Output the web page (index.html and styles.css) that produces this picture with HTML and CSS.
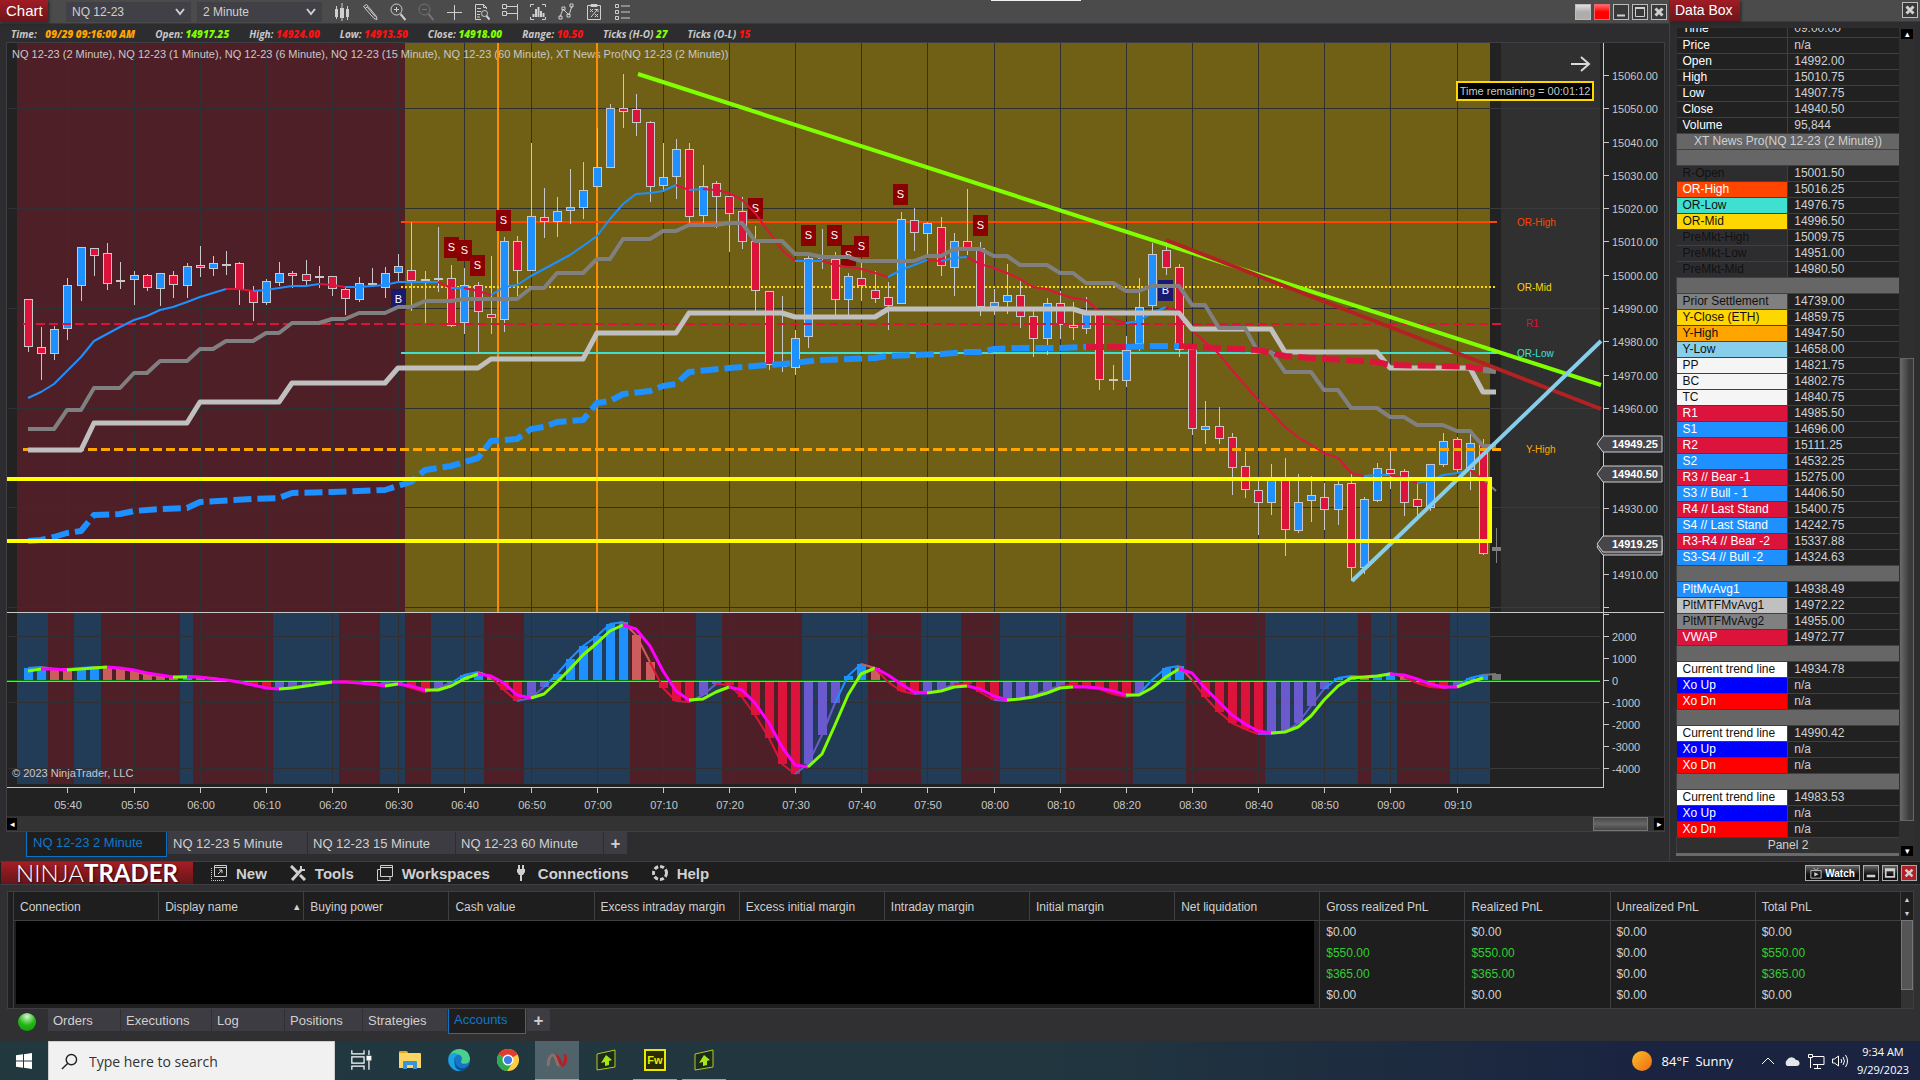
FILE: index.html
```html
<!DOCTYPE html>
<html lang="en">
<head>
<meta charset="utf-8">
<title>NinjaTrader - NQ 12-23</title>
<link rel="stylesheet" href="styles.css">
</head>
<body>
<div class="desktop">
  <div class="upper">
    <section class="chart-window">
      <header class="toolbar">
        <h1 class="red-title">Chart</h1>
        <select class="picker" aria-label="Instrument"><option>NQ 12-23</option></select>
        <select class="picker" aria-label="Interval"><option>2 Minute</option></select>
        <div class="tools">
          <button aria-label="Chart style"><svg viewBox="0 0 16 18"><path d="M2.500 3v13M8 0v18M13.500 3v14" class="s1"/><path d="M1 6h3v8H1zM6 5h4v10H6zM12 6h3v8h-3z" class="f"/></svg></button>
          <button aria-label="Draw"><svg viewBox="0 0 16 18"><path d="M1.500 3.500l3-2 10 12 .5 3-3-1zM3 5.500l3-2M5.500 4.500l8 9.500" class="s1"/></svg></button>
          <button aria-label="Zoom in"><svg viewBox="0 0 16 18"><circle cx="6.500" cy="6.500" r="5.500" class="s1"/><path d="M4 6.500h5M6.500 4v5" class="s1"/><path d="M10.500 11l5 6" class="s2"/></svg></button>
          <button aria-label="Zoom out" class="dim"><svg viewBox="0 0 16 18"><circle cx="6.500" cy="6.500" r="5.500" class="s1"/><path d="M4 6.500h5" class="s1"/><path d="M10.500 11l5 6" class="s2"/></svg></button>
          <button aria-label="Crosshair"><svg viewBox="0 0 16 18"><path d="M1 9.500h15M8.500 2v15" class="s1"/></svg></button>
          <button aria-label="Data box"><svg viewBox="0 0 16 18"><path d="M7 16.500H1.500v-15h8l3 3V6M9.500 1.500v3h3M3 5.500h4M3 8.500h4M3 11.500h3M3 14h3" class="s1"/><circle cx="10.500" cy="10.500" r="3" class="s1"/><path d="M12.500 13l3 3.500" class="s2"/></svg></button>
          <button aria-label="Chart trader"><svg viewBox="0 0 16 18"><path d="M.5 1.500h4v4h-4zM.5 8.500h4v4h-4zM4.500 3.500h11M4.500 10.500h11M15.500 1v16" class="s1"/></svg></button>
          <button aria-label="Data series"><svg viewBox="0 0 16 18"><path d="M.5 4V1.500H4M12 1.500h3.500V4M.5 14v2.500H4M12 16.500h3.500V14" class="s1"/><path d="M3.500 14v-3M6 14V6M8.500 14V4M11 14V8M13.500 14v-4" class="s2"/></svg></button>
          <button aria-label="Indicators"><svg viewBox="0 0 16 18"><path d="M2 14l3-8 6 6 3-9" class="s1"/><path d="M1 13h3v3H1zM4 4h3v3H4zM9 11h3v3H9zM12 1h3v3h-3z" class="s1"/></svg></button>
          <button aria-label="Strategies"><svg viewBox="0 0 16 18"><path d="M1.500 2.500h13v14h-13zM5 1.500h6v2H5zM4 6l3 3M7 6L4 9M9 11l3 3M12 11l-3 3M5 14l6-7M8.500 6.500H12V9" class="s1"/></svg></button>
          <button aria-label="Properties"><svg viewBox="0 0 16 18"><path d="M1.500 1.500h3v3h-3zM1.500 7.500h3v3h-3zM1.500 13.500h3v3h-3zM7 3h9M7 9h9M7 15h9" class="s1"/></svg></button>
        </div>
        <div class="win-buttons">
          <button class="link-grey" aria-label="Instrument link"></button>
          <button class="link-red" aria-label="Interval link"></button>
          <button aria-label="Minimize"><svg viewBox="0 0 14 14"><path d="M3 10.500h8" class="s2"/></svg></button>
          <button aria-label="Maximize"><svg viewBox="0 0 14 14"><path d="M2.500 3.500h9v8h-9z" class="s1"/><path d="M2 3h10" class="s2"/></svg></button>
          <button aria-label="Close"><svg viewBox="0 0 14 14"><path d="M3.500 3.500l7 7M10.500 3.500l-7 7" class="s3"/></svg></button>
        </div>
      </header>
      <div class="readout">
        <span class="r-time">Time: <b class="orange">09/29 09:16:00 AM</b></span>
        <span>Open: <b class="lime">14917.25</b></span>
        <span>High: <b class="red">14924.00</b></span>
        <span>Low: <b class="red">14913.50</b></span>
        <span>Close: <b class="lime">14918.00</b></span>
        <span>Range: <b class="red">10.50</b></span>
        <span>Ticks (H-O) <b class="lime">27</b></span>
        <span>Ticks (O-L) <b class="red">15</b></span>
      </div>
      <div class="chart-frame">
        <svg id="chart" class="chart" viewBox="7 43 1657 773" role="img" aria-label="NQ 12-23 price chart"></svg>
        <div class="hscroll"><button aria-label="Scroll left">◂</button><span class="hthumb"></span><button aria-label="Scroll right">▸</button></div>
      </div>
      <nav class="tabs chart-tabs">
        <button class="active t2">NQ 12-23 2 Minute</button><button class="t5">NQ 12-23 5 Minute</button><button class="t15">NQ 12-23 15 Minute</button><button class="t15">NQ 12-23 60 Minute</button><button class="plus" aria-label="Add tab">+</button>
      </nav>
    </section>

    <aside class="data-window">
      <header class="data-head"><h2 class="red-title">Data Box</h2><button class="close" aria-label="Close"><svg viewBox="0 0 14 14"><path d="M3.500 3.500l7 7M10.500 3.500l-7 7" class="s3"/></svg></button></header>
      <div class="data-body">
        <div class="data-clip"><table class="data"><tbody id="data-rows"></tbody></table></div>
        <div class="vscroll"><button aria-label="Scroll up">▴</button><span class="vthumb"></span><button aria-label="Scroll down">▾</button></div>
      </div>
    </aside>
  </div>

  <section class="control">
    <header class="control-head">
      <div class="logo">NINJA<b>TRADER</b></div>
      <nav class="menu">
        <a href="#new"><svg viewBox="0 0 16 16"><path d="M3.500.5h12v11h-12zM3 2.500h12M7 9l4-4M8 5h3v3" class="s1"/><path d="M.5 3v12.500H13" class="s1 dots"/></svg>New</a>
        <a href="#tools"><svg viewBox="0 0 16 16"><path d="M1 1l7 7M10 10l5 5M2 15L12 4" class="s3"/><path d="M11 1v4h4" class="s2"/></svg>Tools</a>
        <a href="#workspaces"><svg viewBox="0 0 16 16"><path d="M3.500.5h12v11h-12zM3 2.500h12M3 4.500H.5v11H13V12" class="s1"/></svg>Workspaces</a>
        <a href="#connections"><svg viewBox="0 0 16 16"><path d="M6 0v5M10 0v5M8 9v7" class="s2"/><path d="M4 4h8v3l-2 3H6L4 7z" class="f"/></svg>Connections</a>
        <a href="#help"><svg viewBox="0 0 16 16"><circle cx="8" cy="8" r="6.500" class="s3 ring"/></svg>Help</a>
      </nav>
      <div class="control-buttons">
        <button class="watch"><svg viewBox="0 0 14 14"><path d="M1 4h12v9H1zM4 1l3 3 3-3" class="s1"/><path d="M5 6l5 2.500L5 11z" class="f"/></svg>Watch</button>
        <button aria-label="Minimize"><svg viewBox="0 0 14 14"><path d="M2 10.500h10" class="s3"/></svg></button>
        <button aria-label="Maximize"><svg viewBox="0 0 14 14"><path d="M2 2.500h10v9H2zM2 4h10" class="s2"/></svg></button>
        <button class="x" aria-label="Close"><svg viewBox="0 0 14 14"><path d="M3 3l8 8M11 3l-8 8" class="s3"/></svg></button>
      </div>
    </header>
    <div class="accounts">
      <table>
        <thead><tr><th>Connection</th><th class="sorted">Display name</th><th>Buying power</th><th>Cash value</th><th>Excess intraday margin</th><th>Excess initial margin</th><th>Intraday margin</th><th>Initial margin</th><th>Net liquidation</th><th>Gross realized PnL</th><th>Realized PnL</th><th>Unrealized PnL</th><th>Total PnL</th></tr></thead>
        <tbody>
          <tr><td colspan="9" rowspan="4" class="hidden-cells"><div></div></td><td>$0.00</td><td>$0.00</td><td>$0.00</td><td>$0.00</td></tr>
          <tr><td class="up">$550.00</td><td class="up">$550.00</td><td>$0.00</td><td class="up">$550.00</td></tr>
          <tr><td class="up">$365.00</td><td class="up">$365.00</td><td>$0.00</td><td class="up">$365.00</td></tr>
          <tr><td>$0.00</td><td>$0.00</td><td>$0.00</td><td>$0.00</td></tr>
        </tbody>
      </table>
      <div class="acc-scroll"><button aria-label="Scroll up">▲</button><button aria-label="Scroll down">▼</button><span></span></div>
    </div>
    <nav class="tabs bottom-tabs"><i class="orb"></i><button class="w72">Orders</button><button class="w90">Executions</button><button class="w72">Log</button><button class="w77">Positions</button><button class="w84">Strategies</button><button class="active w78">Accounts</button><button class="plus" aria-label="Add tab">+</button></nav>
  </section>

  <footer class="taskbar">
    <button class="start" aria-label="Start"><svg viewBox="0 0 16 16"><path d="M0 2.300L7 1.300v6.200H0zM8 1.200L16 0v7.500H8zM0 8.500h7v6.200l-7-1zM8 8.500h8V16l-8-1.200z" fill="#fff"/></svg></button>
    <label class="search"><svg viewBox="0 0 18 18"><circle cx="11" cy="7" r="5.500"/><path d="M7 11l-6 6"/></svg><input type="text" placeholder="Type here to search" aria-label="Search"></label>
    <div class="apps">
      <button aria-label="Task view"><svg viewBox="0 0 18 18" fill="none" stroke="#fff"><path d="M1.500 1v3h10V1M1.500 17v-3h10v3M1.500 6.500h10v5h-10zM15.500 1v4M15.500 9.500V17"/><path d="M14 6h3v3h-3z" fill="#fff"/></svg></button>
      <button aria-label="File Explorer"><svg viewBox="0 0 22 20"><path d="M0 2q0-1 1-1h7l2 3H0z" fill="#e8a317"/><path d="M0 3h21q1 0 1 1v14H0z" fill="#fcd462"/><path d="M4 19v-7q0-1 1-1h12q1 0 1 1v7h-4v-4H8v4z" fill="#3a95d8"/></svg></button>
      <button aria-label="Edge"><svg viewBox="0 0 24 24"><circle cx="12" cy="12" r="12" fill="#1577c4"/><path d="M1 8Q5 0 13 0q10 1 11 10 0 7-8 6-3-1-1-4 1-5-4-6Q5 5 1 8z" fill="#4ad08e"/><path d="M1 8Q5 2 11 6q-6 3-4 9 2 7 11 7-6 4-12 0Q-1 17 1 8z" fill="#1aa3dd"/><path d="M8 11q-1 9 7 10 4 0 7-3-2 5-8 6Q5 22 8 11z" fill="#0b4d94"/></svg></button>
      <button aria-label="Chrome"><svg viewBox="0 0 24 24"><circle cx="12" cy="12" r="12" fill="#ffcd40"/><path d="M12 12L1.600 6A12 12 0 0 1 22.400 6z" fill="#e33b2e"/><path d="M12 12L1.600 6A12 12 0 0 0 11 24l6-9z" fill="#2da94f"/><circle cx="12" cy="12" r="6" fill="#fff"/><circle cx="12" cy="12" r="4.500" fill="#3f7ee8"/></svg></button>
      <button class="running focus" aria-label="NinjaTrader"><svg viewBox="0 0 24 20"><path d="M1 17Q0 6 7 3q5 0 8 14-2 1-4-2-2-9-4-9-3 3-3 10z" fill="#8d6f68"/><path d="M10 3q6 3 8 11 3-4 1-11l3 1q3 8-3 14-3-1-5-5z" fill="#b82025"/></svg></button>
      <button aria-label="Export"><svg viewBox="0 0 20 22"><path d="M1 5l18-4v17L1 21z" fill="#1d2a1c" stroke="#a8cf24"/><path d="M10 6l6 5-3 1v4l-4 1v-4l-4 1z" fill="#a5e817"/></svg></button>
      <button class="running" aria-label="Fireworks"><svg viewBox="0 0 22 22"><path d="M1 1h20v20H1z" fill="#2b2b00" stroke="#e8e800" stroke-width="2"/><text x="11" y="15" text-anchor="middle" fill="#eded00" font-family="Liberation Sans" font-weight="700" font-size="11">Fw</text></svg></button>
      <button class="running" aria-label="Export"><svg viewBox="0 0 20 22"><path d="M1 5l18-4v17L1 21z" fill="#1d2a1c" stroke="#a8cf24"/><path d="M10 6l6 5-3 1v4l-4 1v-4l-4 1z" fill="#a5e817"/></svg></button>
    </div>
    <div class="tray">
      <i class="sun"></i><span class="weather">84°F&nbsp; Sunny</span>
      <svg class="ic" viewBox="0 0 18 16"><path d="M3 11l6-6 6 6"/></svg>
      <svg class="ic" viewBox="0 0 18 16"><path d="M4 13a4 4 0 0 1 0-6 5 5 0 0 1 9 0 3 3 0 0 1 1 6z" fill="#e4e7ea" stroke="none"/></svg>
      <svg class="ic" viewBox="0 0 18 16"><path d="M6 3.500h11v8H6M10.500 12v3M7 15.500h7M1.500 1.500h4v3h-4zM3.500 5v10"/></svg>
      <svg class="ic" viewBox="0 0 18 16"><path d="M1.500 6v4h2l4 3V3l-4 3zM10 6q1.500 2 0 4M12 4q3 4 0 8M14.500 2q4 6 0 12"/></svg>
      <span class="clock">9:34 AM<br>9/29/2023</span>
    </div>
  </footer>
</div>
<script src="chart.js"></script>
</body>
</html>
```
FILE: styles.css
```css
* { box-sizing: border-box; }
html, body { margin: 0; height: 100%; }
body { font-family: "Liberation Sans", Arial, sans-serif; font-size: 12px; color: #d0d0d0; background: #2d2d2f; overflow: hidden; }
button { font: inherit; color: inherit; background: none; border: 0; padding: 0; }
h1, h2 { margin: 0; font-weight: 400; }
a { color: inherit; text-decoration: none; }
.desktop { display: flex; flex-direction: column; min-height: 100vh; }
.upper { flex: 1; display: flex; border-bottom: 1px solid #3f3f43; }

.s1, .s2, .s3 { fill: none; stroke: #cfcfcf; }
.s2 { stroke-width: 2; }
.s3 { stroke-width: 3; }
.f { fill: #cfcfcf; }

/* chart window */
.chart-window { flex: 1; min-width: 0; border-right: 1px solid #3f3f43; }
.toolbar { display: flex; align-items: center; height: 24px; padding-right: 2px; background: #4b4b4b; border-bottom: 1px solid #3a3a3c; }
.toolbar::after { content: ""; position: absolute; left: 991px; top: 0; width: 90px; height: 1px; background: #f0f0f0; }
.red-title { height: 22px; align-self: flex-start; padding: 0 6px; font-size: 15px; line-height: 22px; color: #fff; background: linear-gradient(#a01c24, #6d151c); box-shadow: 1px 1px 3px #222; }
.toolbar .red-title { width: 48px; margin-right: 18px; }
.picker { appearance: none; width: 125px; height: 20px; margin-right: 6px; padding: 0 6px; border: 0; font: inherit; color: #d0d0d0; background: #404046 url("data:image/svg+xml,%3Csvg xmlns='http://www.w3.org/2000/svg' width='10' height='8'%3E%3Cpath d='M1 1l4 5 4-5' fill='none' stroke='%23d0d0d0' stroke-width='2'/%3E%3C/svg%3E") no-repeat right 6px center; }
.tools { display: flex; gap: 12px; padding-left: 6px; }
.tools button { width: 16px; height: 18px; }
.tools svg, .win-buttons svg, .close svg { display: block; width: 100%; height: 100%; }
.dim { opacity: .3; }
.win-buttons { display: flex; gap: 3px; margin-left: auto; }
.win-buttons button, .close { width: 16px; height: 16px; border: 1px solid #bdbdbd; background: #39393b; }
.win-buttons .link-grey { background: linear-gradient(#e0e0e0, #b0acac 50%); }
.win-buttons .link-red { background: linear-gradient(#ff6868, #f00 50%); border-color: #e66; }
.readout { display: flex; gap: 20px; height: 18px; padding: 0 11px; align-items: center; font: italic 700 10px/18px "Open Sans", sans-serif; color: #c8c8c8; }
.readout > span { padding-top: 2px; }
.r-time b { margin-left: 6px; }
.orange { color: #ffa500; }
.lime { color: #7fff00; }
.red { color: #ff1010; }
.chart-frame { margin: 0 4px 0 6px; border: 1px solid #3f3f43; }
.chart { display: block; width: 100%; height: auto; background: #222; }
.chart text { font-size: 11px; fill: #c8c8c8; }
.chart .small { font-size: 10px; }
.chart .tag { font-weight: 700; fill: #fff; }
.hscroll { display: flex; align-items: center; justify-content: flex-end; gap: 6px; height: 15px; background: #333; }
.hscroll button, .vscroll button { width: 10px; height: 12px; background: #000; color: #fff; font-size: 9px; line-height: 10px; }
.hscroll button:first-child { margin-right: auto; }
.hthumb { width: 55px; height: 14px; border: 1px solid #777; background: linear-gradient(#4a4a4a, #666 50%, #444); }

.tabs { display: flex; align-items: flex-start; gap: 1px; }
.tabs button { height: 22px; padding: 0 5px; text-align: left; background: #3c3c42; font-size: 13px; line-height: 21px; white-space: nowrap; }
.tabs .active { height: 25px; padding-bottom: 3px; border: 1px solid #0b72c4; border-top: 0; background: #1e1e1e; color: #0f78cc; }
.tabs .plus { width: 23px; padding: 0; text-align: center; font-size: 17px; font-weight: 700; }
.chart-tabs { padding-left: 26px; height: 29px; }
.chart-tabs .active { padding-left: 6px; }
.t2 { width: 141px; } .t5 { width: 139px; } .t15 { width: 147px; }

/* data box */
.data-window { width: 250px; display: flex; flex-direction: column; }
.data-head { display: flex; justify-content: space-between; height: 22px; padding-right: 2px; background: #4b4b4b; border-bottom: 1px solid #3a3a3c; }
.data-head .red-title { width: 70px; height: 21px; padding: 0 5px; font-size: 14px; line-height: 20px; }
.close { margin-top: 2px; }
.data-body { flex: 1 1 0; min-height: 0; display: flex; margin: 6px 5px 5px 6px; overflow: hidden; }
.data-clip { flex: 1; overflow: hidden; border-bottom: 3px solid #6a6a6a; }
.data { width: 100%; margin-top: -7px; table-layout: fixed; border-collapse: collapse; }
.data th, .data td { height: 16px; padding: 0 6px; font-weight: 400; font-size: 12px; line-height: 15px; text-align: left; border-bottom: 1px solid #3f3f46; background: #212121; overflow: hidden; white-space: nowrap; }
.data td { border-left: 1px solid #3f3f46; }
.data th { color: #fff; }
.data .band td { background: #666; text-align: center; }
.data .panel td { background: #303030; text-align: center; }
.vscroll { display: flex; flex-direction: column; align-items: center; width: 16px; background: #2f2f2f; }
.vscroll button { width: 12px; height: 10px; margin-top: 1px; line-height: 9px; }
.vthumb { margin: auto 0 24px; width: 14px; height: 463px; border: 1px solid #666; background: linear-gradient(90deg, #666, #3a3a3a 70%); }

/* control center */
.control { background: #303032; }
.control-head { display: flex; align-items: center; height: 23px; padding-left: 1px; padding-right: 3px; background: #1e1e1e; border-bottom: 1px solid #3f3f43; }
.logo { width: 192px; height: 22px; background: linear-gradient(#a51d24, #64161b); color: #fff; font: 300 24px/22px Lato, sans-serif; text-align: center; text-shadow: 1px 1px 2px #300; white-space: nowrap; }
.logo b { font-weight: 700; }
.menu { display: flex; gap: 23px; padding-left: 18px; font-weight: 700; font-size: 15px; }
.menu a { display: flex; align-items: center; gap: 9px; }
.menu svg { width: 16px; height: 16px; }
.dots { stroke-dasharray: 1 1; }
.ring { stroke-dasharray: 4 2; }
.control-buttons { display: flex; gap: 3px; margin-left: auto; }
.control-buttons button { display: flex; align-items: center; justify-content: center; width: 16px; height: 16px; border: 1px solid #aaa; background: linear-gradient(#666, #111 60%); color: #fff; }
.control-buttons svg { width: 12px; height: 12px; }
.control-buttons .watch { width: 55px; gap: 3px; font-weight: 700; font-size: 10px; }
.control-buttons .x { background: #b21f24; }
.accounts { display: flex; margin: 6px 6px 0 7px; height: 118px; border: 1px solid #3f3f43; background: #1e1e1e; }
.accounts table { flex: 1; width: 100%; border-collapse: collapse; table-layout: fixed; height: 100%; margin-left: 5px; }
.accounts th { height: 28px; padding: 2px 6px 0; text-align: left; font-weight: 400; border: 1px solid #3f3f43; border-top: 0; white-space: nowrap; overflow: hidden; }
.accounts td { height: 21px; padding: 2px 6px 0; border-left: 1px solid #3f3f43; }
.accounts tbody tr:last-child td { padding-bottom: 5px; height: 26px; }
.accounts td.hidden-cells { padding: 0 5px 5px 2px; height: 88px; }
.hidden-cells div { height: 83px; background: #000; }
.sorted::after { content: "▴"; float: right; font-size: 11px; margin-right: -3px; }
.up { color: #32cd32; }
.acc-scroll { display: flex; flex: none; flex-direction: column; width: 12px; background: #333; }
.acc-scroll button { height: 14px; font-size: 7px; background: #1e1e1e; }
.acc-scroll span { height: 70px; border: 1px solid #777; background: #555; }
.bottom-tabs { height: 32px; }
.orb { width: 18px; height: 18px; margin: 4px 11px 0 18px; border-radius: 50%; background: radial-gradient(circle at 50% 20%, #d5f5d0, #22b814 50%, #139010); }
.w72 { width: 72px; } .w90 { width: 90px; } .w77 { width: 77px; } .w84 { width: 84px; } .w78 { width: 78px; }

/* taskbar */
.taskbar { display: flex; height: 40px; background: linear-gradient(90deg, #22383f, #21363f 55%, #1a2440 85%); font-family: "Open Sans", "Noto Sans", sans-serif; color: #fff; }
.start { width: 48px; display: flex; align-items: center; justify-content: center; }
.start svg { width: 16px; height: 16px; }
.search { display: flex; align-items: center; gap: 11px; width: 287px; padding-left: 12px; background: #f1f1f1; border: 1px solid #ccc; }
.search svg { width: 17px; height: 17px; fill: none; stroke: #222; stroke-width: 1.500; }
.search input { width: 220px; border: 0; outline: 0; background: none; padding: 0; font: 14px "Open Sans", sans-serif; }
.search input::placeholder { color: #333; }
.apps { display: flex; gap: 5px; padding-left: 4px; }
.apps button { width: 44px; display: flex; align-items: center; justify-content: center; border-bottom: 2px solid transparent; }
.apps svg { width: 22px; height: 22px; }
.apps .running { border-color: #9aa0a8; }
.apps .focus { background: #50636a; }
.tray { display: flex; align-items: center; gap: 6px; margin-left: auto; padding-right: 9px; font-size: 13px; }
.sun { width: 20px; height: 20px; border-radius: 50%; background: linear-gradient(135deg, #f8c02c, #f06a10); }
.weather { margin: 0 20px 0 4px; }
.ic { width: 18px; height: 16px; fill: none; stroke: #fff; }
.clock { width: 56px; text-align: center; font-size: 11px; line-height: 18px; white-space: nowrap; }
```
FILE: chart.js
```js
const svg = document.getElementById('chart');
const NS = 'http://www.w3.org/2000/svg';
const BLUE = '#1e90ff', RED = '#dc143c', GREY = '#808080', SILVER = '#c8c8c8';
const x = i => Math.round(27.8 + 13.23 * i);

function add(tag, attrs, text) {
  const el = document.createElementNS(NS, tag);
  for (const k in attrs) el.setAttribute(k, attrs[k]);
  if (text !== undefined) el.textContent = text;
  svg.appendChild(el);
}
const rect = (x0, y0, w, h, fill, more) => add('rect', { x: x0, y: y0, width: w, height: h, fill, ...more });
const line = (x1, y1, x2, y2, stroke, w = 1, dash = 'none') =>
  add('line', { x1, y1, x2, y2, stroke, 'stroke-width': w, 'stroke-dasharray': dash });
const label = (tx, ty, text, more = {}) => add('text', { x: tx, y: ty, ...more }, text);
const poly = (pts, stroke, w, dash = 'none') => add('polyline', {
  points: pts.map(p => x(p[0]) + ',' + p[1]).join(' '), fill: 'none', stroke, 'stroke-width': w,
  'stroke-dasharray': dash, 'stroke-linejoin': 'round'
});

/* session backgrounds and grid */
rect(17, 43, 388, 569, '#4f1f27');
rect(405, 43, 1085, 569, '#6f6016');
rect(1501, 43, 99, 569, '#303030');
rect(17, 613, 1473, 171, '#4f1f27');
[[17, 48], [74, 101], [180, 193], [273, 339], [380, 405], [431, 484], [524, 630], [696, 722], [802, 868],
 [921, 961], [1000, 1066], [1133, 1186], [1265, 1358], [1371, 1397], [1450, 1490]]
  .forEach(([a, b]) => rect(a, 613, b - a, 171, '#223c58'));
for (let i = 3; i <= 108; i += 5) line(x(i) + .5, 43, x(i) + .5, 784, '#303033');
[108.5, 208.5, 308.5, 408.5, 507.5, 607.5, 636.5, 702.5, 768.5].forEach(y => {
  line(8, y, 1490, y, '#303033');
  line(1490, y, 1600, y, '#3a3a3c');
});
label(12, 58, 'NQ 12-23 (2 Minute), NQ 12-23 (1 Minute), NQ 12-23 (6 Minute), NQ 12-23 (15 Minute), NQ 12-23 (60 Minute), XT News Pro(NQ 12-23 (2 Minute))');

/* session levels drawn behind the candles */
line(498, 43, 498, 612, '#ff8c00', 2);
line(597, 43, 597, 612, '#ff8c00', 2);
line(401, 222, 1497, 222, '#ff4500', 2);
line(401, 287, 1497, 287, '#ffd700', 2, '2 2');
line(401, 353, 1497, 353, '#40e0d0', 2);

/* candles: high, body top, body bottom, low, direction */
const candles = [
  [299,299,347,352,'r'],[327,347,354,380,'r'],[326,329,354,360,'b'],[278,285,329,340,'b'],[247,247,286,301,'b'],
  [248,248,256,276,'r'],[243,253,284,290,'r'],[262,281,281,289,'g'],[271,275,280,305,'b'],[274,275,288,291,'r'],
  [273,273,289,306,'b'],[271,275,285,298,'r'],[263,266,286,298,'b'],[246,265,268,277,'r'],[256,263,269,276,'b'],
  [251,265,265,275,'g'],[262,263,290,305,'r'],[286,290,303,321,'r'],[279,281,303,305,'b'],[262,273,283,286,'b'],
  [271,273,276,288,'r'],[260,274,281,285,'r'],[266,277,277,288,'g'],[276,276,289,296,'r'],[288,289,299,315,'r'],
  [277,283,300,302,'b'],[268,284,284,285,'g'],[267,273,288,298,'b'],[254,266,273,281,'b'],[222,270,281,311,'r'],
  [271,280,280,323,'g'],[227,279,279,292,'g'],[265,278,326,327,'r'],[268,285,323,334,'b'],[282,285,312,353,'r'],
  [256,314,318,334,'r'],[237,241,320,332,'b'],[236,241,271,296,'r'],[143,216,271,271,'b'],[188,217,222,238,'r'],
  [197,211,222,237,'b'],[169,207,211,224,'b'],[162,190,208,219,'b'],[128,167,187,187,'b'],[104,108,168,168,'b'],
  [74,108,112,128,'r'],[94,109,123,136,'r'],[121,122,187,202,'r'],[143,177,186,192,'b'],[139,149,177,199,'b'],
  [143,149,217,223,'r'],[165,186,216,223,'b'],[181,183,197,228,'r'],[196,196,214,252,'r'],[197,211,242,249,'r'],
  [226,241,291,311,'r'],[291,291,365,370,'r'],[296,366,366,372,'g'],[330,338,368,375,'b'],[256,258,337,348,'b'],
  [229,258,258,269,'g'],[252,259,300,315,'r'],[273,276,300,315,'b'],[262,278,286,301,'r'],[271,290,299,303,'r'],
  [282,297,306,330,'r'],[212,219,304,304,'b'],[208,220,233,251,'r'],[222,223,234,256,'b'],[217,227,266,276,'r'],
  [233,241,268,296,'b'],[189,241,250,255,'r'],[242,248,307,316,'r'],[289,302,307,315,'b'],[264,295,302,314,'b'],
  [281,295,317,328,'r'],[309,316,339,357,'r'],[298,303,339,355,'b'],[291,303,325,339,'r'],[302,325,328,340,'r'],
  [297,312,329,334,'b'],[311,311,380,390,'r'],[365,380,380,390,'g'],[336,350,381,387,'b'],[278,307,344,351,'b'],
  [243,254,306,313,'b'],[240,250,268,275,'r'],[264,267,350,357,'r'],[349,349,429,435,'r'],[401,426,430,444,'b'],
  [407,426,439,444,'r'],[433,437,468,495,'r'],[452,466,490,498,'r'],[480,490,503,535,'r'],[464,479,503,515,'b'],
  [458,479,530,556,'r'],[474,502,531,533,'b'],[476,495,501,522,'b'],[483,497,510,530,'r'],[481,484,510,525,'b'],
  [474,483,568,581,'r'],[497,499,568,574,'b'],[463,468,501,502,'b'],[451,469,474,489,'r'],[469,471,503,516,'r'],
  [484,499,507,516,'r'],[464,464,508,511,'b'],[433,441,465,467,'b'],[437,439,470,473,'r'],[433,443,470,490,'b'],
  [439,445,554,555,'r']
];
candles.forEach(([hi, top, bot, lo, c], i) => {
  const cx = x(i);
  line(cx + .5, hi, cx + .5, lo, SILVER);
  if (c === 'g') rect(cx - 4, top - 1, 9, 2, SILVER);
  else rect(cx - 3.5, top + .5, 8, Math.max(2, bot - top - 1), c === 'b' ? BLUE : RED, { stroke: SILVER });
});
line(1496.5, 528, 1496.5, 563, GREY);
rect(1492, 547, 9, 4, GREY);
line(23, 324, 1501, 324, RED, 2, '9 4');
line(23, 449.5, 1501, 449.5, '#ffa500', 3, '9 4');

/* trade signals */
const marks = [[451,247,'S'],[464,250,'S'],[477,265,'S'],[503,220,'S'],[755,208,'S'],[808,235,'S'],[848,255,'S'],[834,235,'S'],
  [861,246,'S'],[900,194,'S'],[980,225,'S'],[398,299,'B'],[1165,290,'B']];
marks.forEach(([mx, my, t]) => {
  rect(mx - 7, my - 10, 15, 21, t === 'S' ? '#8b0000' : '#191970');
  label(mx + .5, my + 4, t, { 'text-anchor': 'middle', style: 'fill:#fff' });
});

/* draws a list of values, one per bar, coloured by direction codes */
function coloured(ys, codes, palette, w) {
  for (let i = 1; i < ys.length; i++) {
    let j = i;
    while (j + 1 < ys.length && codes[j + 1] === codes[i]) j++;
    const pts = [];
    for (let k = i - 1; k <= j; k++) pts.push([k, ys[k]]);
    poly(pts, palette[codes[i]], w);
    i = j;
  }
}
const ma = [398,392,384,371,357,341,334,327,320,316,310,307,302,297,293,289,289,291,290,288,286,286,284,285,287,287,286,285,282,282,
  282,282,288,288,291,295,287,285,276,269,262,255,246,236,219,204,194,193,191,185,190,189,190,193,200,213,232,250,261,261,
  261,265,267,269,273,277,270,265,260,261,258,257,264,268,273,279,287,289,294,298,300,311,319,323,321,313,307,311,330,342,
  354,370,385,400,412,427,437,445,453,458,473,476,475,475,478,483,481,475,473,470,479,491];
const maCodes = 'bbbbbbbbbbbbbbbbrrbbbbbrrbbbbbbbrbrrbbbbbbbbbbbbbbrbrrrrrrrbbrrrrrbbbrbbrrrrrrrrrrrrbbbrrrrrrrrrrrrrrrbbrrbbbbrg';
coloured(ma, maCodes, { b: BLUE, r: RED, g: GREY }, 2);

poly([[0,450],[4,450],[5,423],[12,423],[13,402],[19,402],[20,383],[27,383],[28,368],[34,368],[35,359],[42,359],[43,333],[49,333],
  [50,313],[57,313],[58,317],[64,317],[65,309],[79,309],[80,313],[87,313],[88,329],[94,329],[95,352],[102,352],[103,368],
  [109,368],[110,392],[111,392]], '#c0c0c0', 5);
poly([[0,429],[2,429],[3,410],[4,410],[5,388],[7,388],[8,373],[9,373],[10,361],[12,361],[13,349],[14,349],[15,341],[17,341],[18,333],
  [19,333],[20,323],[22,323],[23,319],[24,319],[25,313],[27,313],[28,307],[29,307],[30,301],[32,301],[33,299],[37,299],[38,288],
  [39,288],[40,273],[42,273],[43,259],[44,259],[45,239],[47,239],[48,231],[49,231],[50,225],[52,225],[53,223],[54,223],[55,241],
  [57,241],[58,254],[59,254],[60,257],[62,257],[63,261],[67,261],[68,256],[69,256],[70,249],[72,249],[73,256],[74,256],[75,265],
  [77,265],[78,273],[79,273],[80,283],[82,283],[83,291],[84,291],[85,286],[87,286],[88,305],[89,305],[90,328],[92,328],[93,352],
  [94,352],[95,372],[97,372],[98,390],[99,390],[100,408],[102,408],[103,417],[104,417],[105,425],[107,425],[108,431],[109,431],
  [110,446],[111,446]], GREY, 4);

/* volume weighted average price */
poly([[0,541],[1,540],[2,537],[3,533],[4,531],[5,515],[7,514],[8,511],[10,509],[12,508],[13,502],[17,499],[19,498],[20,493],[23,492],
  [27,490],[29,482],[30,470],[32,466],[34,458],[35,441],[37,439],[38,429],[39,427],[40,422],[42,420],[43,403],[44,401],[45,394],
  [47,391],[48,386],[49,384],[50,372],[53,368],[57,364],[60,360],[64,358],[65,356],[69,354],[71,352],[72,352],[73,349],[75,348],
  [78,348],[80,347]], BLUE, 6, '18 6');
poly([[80,347],[83,347]], RED, 6, '18 3');
poly([[83,347],[85,346],[87,346]], BLUE, 6, '18 6');
poly([[87,346],[90,348],[93,350],[95,356],[97,358],[102,362],[103,365],[107,366],[109,367],[110,369]], RED, 6, '18 6');
poly([[110,370],[111,371]], GREY, 6);

/* user drawings */
line(638, 74, 1601, 385, '#7fff00', 4);
line(1166, 240, 1601, 409, '#b22222', 4);
line(1352, 581, 1601, 341, '#87ceeb', 4);
add('path', { d: 'M7 479H1490V541H7', fill: 'none', stroke: '#ff0', 'stroke-width': 4 });

label(1517, 226, 'OR-High', { class: 'small', style: 'fill:#ff4500' });
label(1517, 291, 'OR-Mid', { class: 'small', style: 'fill:#ffd700' });
label(1526, 327, 'R1', { class: 'small', style: 'fill:#dc143c' });
label(1517, 357, 'OR-Low', { class: 'small', style: 'fill:#40e0d0' });
label(1526, 453, 'Y-High', { class: 'small', style: 'fill:#ffa500' });
add('path', { d: 'M1571 64h17M1581 57l8 7-8 7', fill: 'none', stroke: '#d8d8d8', 'stroke-width': 2 });
rect(1457, 82, 136, 18, '#000', { stroke: '#ffd700', 'stroke-width': 2 });
label(1525, 95, 'Time remaining = 00:01:12', { 'text-anchor': 'middle' });

/* momentum panel */
const hist = [668,667,669,669,668,667,667,669,671,675,676,677,676,677,678,680,682,685,688,689,687,686,684,682,681,682,685,684,683,688,
  692,688,683,675,672,677,690,701,698,687,674,659,646,636,624,622,635,662,688,701,702,695,684,685,697,715,738,764,774,764,
  735,703,676,664,668,682,691,694,693,690,684,684,692,700,701,698,696,690,686,685,687,689,694,697,694,680,668,666,680,697,
  712,723,729,734,734,732,723,706,689,678,676,677,677,673,677,683,687,688,686,678,675,674];
const histCodes = 'bbss' + 'bb' + 'ssssss' + 'b' + 'sss' + 'ccc' + 'ppppp' + 'ccc' + 'pp' + 'cc' + 'pp' + 'bb' + 's' + 'cc' + 'pp' + 'bbbbbb' + 'ss' + 'ccc' + 'pp' +
  'cccccc' + 'ppp' + 'bb' + 's' + 'ccc' + 'ppp' + 'ccc' + 'ppppp' + 'ccccc' + 'p' + 'bbb' + 's' + 'ccccc' + 'ppppp' + 'bb' + 's' + 'bb' + 's' + 'ccc' + 'p' + 'bb' + 'g';
const histColours = { b: BLUE, s: '#cd5c5c', c: RED, p: '#6a5acd', g: '#777' };
hist.forEach((y, i) => rect(x(i) - 4, Math.min(y, 681), 9, Math.abs(y - 681), histColours[histCodes[i]]));
line(7, 680.5, 1600, 680.5, '#008000');
line(7, 681.5, 1600, 681.5, '#ffa500');
coloured(hist, histCodes, histColours, 2);
const sig = [671,669,669,670,669,668,667,668,670,673,675,677,677,677,679,680,682,685,688,689,688,686,684,682,682,683,684,686,684,686,
  690,690,686,679,674,676,683,695,698,694,682,669,655,643,631,625,629,646,671,691,700,699,692,687,690,703,723,747,765,767,
  754,725,695,674,668,675,684,692,693,691,687,686,689,696,700,699,697,693,688,687,687,688,691,695,695,688,677,669,673,688,
  702,715,724,731,733,732,727,716,700,686,678,677,676,674,675,679,684,687,687,682,678];
const sigCodes = 'ggmm' + 'ggg' + 'mmmmm' + 'g' + 'mmmmmmm' + 'gggg' + 'mmmm' + 'g' + 'mm' + 'gggg' + 'mmmm' + 'ggggggg' + 'mmmmm' + 'ggg' + 'mmmmmm' +
  'ggggg' + 'mmmm' + 'ggg' + 'mmm' + 'ggggg' + 'mmmm' + 'gggg' + 'mmmmmmm' + 'ggggggggg' + 'mmmmm' + 'gg';
coloured(sig, sigCodes, { g: '#7fff00', m: '#ff00ff' }, 3);
label(12, 777, '© 2023 NinjaTrader, LLC');

/* axes */
line(7, 612.5, 1664, 612.5, SILVER);
line(7, 787.5, 1604, 787.5, SILVER);
line(1603.5, 43, 1603.5, 788, SILVER);
[15060, 15050, 15040, 15030, 15020, 15010, 15000, 14990, 14980, 14970, 14960, 14930, 14910].forEach(p => {
  const y = Math.round(75 + (15060 - p) * 3.328);
  line(1604, y + .5, 1609, y + .5, SILVER);
  label(1612, y + 5, p + '.00');
});
[607.5, 614.5].forEach(y => line(1604, y, 1609, y, SILVER));
[2000, 1000, 0, -1000, -2000, -3000, -4000].forEach(v => {
  const y = 681 - v * .022;
  line(1604, Math.round(y) - .5, 1609, Math.round(y) - .5, SILVER);
  label(1612, Math.round(y) + 4, v);
});
[[547, ''], [444, '14949.25'], [474, '14940.50'], [544, '14919.25']].forEach(([y, t]) => {
  add('path', { d: `M1597 ${y}l6-8h59v16h-59z`, fill: '#45454a', stroke: '#d0d0d0' });
  label(1612, y + 4, t, { class: 'tag' });
});
for (let i = 3; i <= 108; i += 5) {
  const m = 334 + i * 2;
  line(x(i) + .5, 788, x(i) + .5, 793, SILVER);
  label(x(i) + 1, 809, String(Math.floor(m / 60)).padStart(2, '0') + ':' + String(m % 60).padStart(2, '0'), { 'text-anchor': 'middle' });
}

/* data box: label, value, label background, label colour */
const W = '#fff', K = '#111', D = '#2d2d30';
const rows = [
  ['Time','09:00:00'],['Price','n/a'],['Open','14992.00'],['High','15010.75'],['Low','14907.75'],['Close','14940.50'],['Volume','95,844'],
  'XT News Pro(NQ 12-23 (2 Minute))','',
  ['R-Open','15001.50',D,K],['OR-High','15016.25','#ff4500',W],['OR-Low','14976.75','#40e0d0',K],['OR-Mid','14996.50','#ffd700',K],
  ['PreMkt-High','15009.75',D,K],['PreMkt-Low','14951.00',D,K],['PreMkt-Mid','14980.50',D,K],'',
  ['Prior Settlement','14739.00',GREY,K],['Y-Close (ETH)','14859.75','#ffd700',K],['Y-High','14947.50','#ffa500',K],
  ['Y-Low','14658.00','#87ceeb',K],['PP','14821.75','#f5f5f5',K],['BC','14802.75','#f5f5f5',K],['TC','14840.75','#f5f5f5',K],
  ['R1','14985.50',RED,W],['S1','14696.00',BLUE,W],['R2','15111.25',RED,W],['S2','14532.25',BLUE,W],
  ['R3 // Bear -1','15275.00',RED,W],['S3 // Bull - 1','14406.50',BLUE,W],['R4 // Last Stand','15400.75',RED,W],
  ['S4 // Last Stand','14242.75',BLUE,W],['R3-R4 // Bear -2','15337.88',RED,W],['S3-S4 // Bull -2','14324.63',BLUE,W],'',
  ['PltMvAvg1','14938.49',BLUE,W],['PltMTFMvAvg1','14972.22','#c0c0c0',K],['PltMTFMvAvg2','14955.00',GREY,K],['VWAP','14972.77',RED,W],'',
  ['Current trend line','14934.78',W,K],['Xo Up','n/a','#00f',W],['Xo Dn','n/a','#f00',W],'',
  ['Current trend line','14990.42',W,K],['Xo Up','n/a','#00f',W],['Xo Dn','n/a','#f00',W],'',
  ['Current trend line','14983.53',W,K],['Xo Up','n/a','#00f',W],['Xo Dn','n/a','#f00',W]
];
document.getElementById('data-rows').innerHTML = rows.map(r => typeof r === 'string'
  ? `<tr class="band"><td colspan="2">${r}</td></tr>`
  : `<tr><th scope="row"${r[2] ? ` style="background:${r[2]};color:${r[3]}"` : ''}>${r[0]}</th><td>${r[1]}</td></tr>`).join('')
  + '<tr class="panel"><td colspan="2">Panel 2</td></tr>';
```
